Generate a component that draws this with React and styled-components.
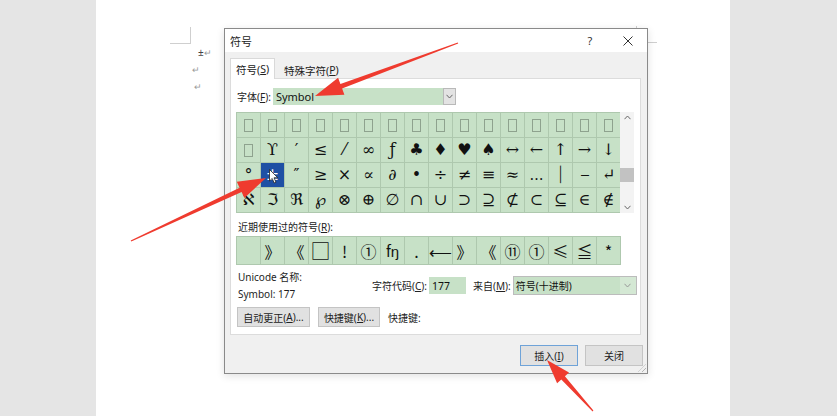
import React from 'react'
import styled, { createGlobalStyle } from 'styled-components'

const GlobalStyle = createGlobalStyle`
  html, body { margin: 0; padding: 0; }
  body {
    background: #e5e5e5;
    font-family: "Noto Sans", "Noto Sans CJK SC", sans-serif;
    font-size: 10.5px;
    color: #1e1e1e;
  }
  * { box-sizing: border-box; }
`

const Stage = styled.div`
  position: relative;
  width: 837px;
  height: 416px;
  overflow: hidden;
`

const Page = styled.div`
  position: relative;
  width: 634px;
  height: 416px;
  margin-left: 96px;
  background: #fff;
  padding: 44px 0 0 96px;
`

const CropMark = styled.div`
  position: absolute;
  left: ${(p) => p.$x}px;
  top: ${(p) => p.$y}px;
  width: 21px;
  height: 17px;
  border-color: #cfcfcf;
  border-style: solid;
  border-width: 0;
  ${(p) => (p.$side === 'left' ? 'border-right-width: 1px; border-bottom-width: 1px;' : 'border-left-width: 1px; border-bottom-width: 1px;')}
`

const DocLine = styled.div`
  height: 17px;
  line-height: 17px;
  padding-left: ${(p) => p.$indent || 0}px;
  font-family: "Noto Sans", sans-serif;
  font-size: 10px;
  color: #444;
`

const Return = styled.span`
  color: #9a9a9a;
  font-size: 9px;
`

const Dialog = styled.div`
  position: absolute;
  left: 128px;
  top: 28px;
  width: 424px;
  height: 346px;
  border: 1px solid #8a8a8a;
  background: #f0f0f0;
  display: flex;
  flex-direction: column;
  box-shadow: 0 2px 8px rgba(0, 0, 0, 0.12);
`

const TitleBar = styled.div`
  height: 23px;
  background: #fff;
  display: flex;
  align-items: center;
  padding-left: 5px;
`

const Title = styled.div`
  flex: 1;
  font-size: 11px;
  color: #222;
`

const TitleButton = styled.div`
  width: 38px;
  height: 23px;
  display: flex;
  align-items: center;
  justify-content: center;
  font-size: 11px;
  color: #333;
`

const Tabs = styled.div`
  display: flex;
  align-items: flex-end;
  height: 21px;
  margin-top: 6px;
  padding-left: 5px;
  position: relative;
  z-index: 1;
`

const Tab = styled.div`
  height: ${(p) => (p.$active ? 21 : 19)}px;
  padding: 0 ${(p) => (p.$active ? 5 : 6)}px;
  display: flex;
  align-items: center;
  background: ${(p) => (p.$active ? '#fff' : 'transparent')};
  border: 1px solid ${(p) => (p.$active ? '#d9d9d9' : 'transparent')};
  border-bottom: none;
  margin-left: ${(p) => (p.$active ? 0 : 2)}px;
  color: #222;
`

const Panel = styled.div`
  margin: -1px 6px 0 5px;
  height: 257px;
  background: #fff;
  border: 1px solid #dcdcdc;
  padding: 9px 0 0 5px;
  display: flex;
  flex-direction: column;
`

const FontRow = styled.div`
  display: flex;
  align-items: center;
  height: 17px;
  padding-left: 1px;
`

const Label = styled.span`
  color: #222;
  white-space: nowrap;
  flex-shrink: 0;
  font-size: 10px;
  min-width: ${(p) => (p.$w ? `${p.$w}px` : 'auto')};
  margin-left: ${(p) => p.$ml || 0}px;
  padding-right: ${(p) => (p.$w ? 2 : 0)}px;
`

const GreenBox = styled.div`
  width: ${(p) => p.$w}px;
  height: ${(p) => p.$h || 17}px;
  background: #c7e1c7;
  display: flex;
  align-items: center;
  padding-left: 3px;
  color: #111;
  font-size: ${(p) => p.$fs || 10.5}px;
`

const DropButton = styled.div`
  width: 13px;
  height: 17px;
  background: #e3e3e3;
  border: 1px solid #b9b9b9;
  display: flex;
  align-items: center;
  justify-content: center;
`

const GridWrap = styled.div`
  display: flex;
  margin-top: 7px;
`

const SymbolGrid = styled.div`
  display: grid;
  grid-template-columns: repeat(16, 23px);
  grid-auto-rows: ${(p) => p.$row}px;
  gap: 1px;
  padding: 1px;
  background: #aec8ae;
  width: 385px;
`

const Cell = styled.div`
  position: relative;
  background: ${(p) => (p.$selected ? '#1f50a4' : '#c7e1c7')};
  color: ${(p) => (p.$selected ? '#fff' : '#111')};
  display: flex;
  align-items: center;
  justify-content: center;
  font-family: ${(p) => (p.$cjk ? '"Noto Sans CJK SC", sans-serif' : '"DejaVu Serif", "DejaVu Sans", serif')};
  font-size: ${(p) => p.$fs || 16}px;
  line-height: 1;
`

const Missing = styled.span`
  display: inline-block;
  width: 9px;
  height: 13px;
  border: 1px solid #8ea28e;
`

const Scrollbar = styled.div`
  position: relative;
  width: 14px;
  height: 101px;
  margin-left: -1px;
  background: #f3f3f3;
  display: flex;
  flex-direction: column;
  align-items: center;
  justify-content: space-between;
  padding: 3px 0;
`

const Thumb = styled.div`
  position: absolute;
  left: 0;
  top: 56px;
  width: 14px;
  height: 14px;
  background: #c2c2c2;
`

const SectionLabel = styled.div`
  margin-top: 7px;
  height: 14px;
  line-height: 14px;
  padding-left: 2px;
  font-size: 10px;
  color: #222;
`

const RecentWrap = styled.div`
  margin-top: 2px;
`

const InfoRow = styled.div`
  display: flex;
  align-items: center;
  margin-top: 5px;
  padding-left: 2px;
  height: 31px;
`

const InfoColumn = styled.div`
  width: 134px;
  display: flex;
  flex-direction: column;
  gap: 3px;
  line-height: 14px;
  font-size: 10px;
`

const Select = styled.div`
  display: flex;
  width: 124px;
  height: 19px;
  border: 1px solid #bcbcbc;
  background: #c7e1c7;
`

const SelectText = styled.div`
  flex: 1;
  display: flex;
  align-items: center;
  padding-left: 2px;
  font-size: 10px;
  color: #111;
`

const SelectArrow = styled.div`
  width: 16px;
  display: flex;
  align-items: center;
  justify-content: center;
  background: #d4e8d4;
`

const ButtonRow = styled.div`
  display: flex;
  align-items: center;
  gap: 8px;
  margin-top: 6px;
  padding-left: 1px;
`

const Button = styled.div`
  height: ${(p) => p.$h || 20}px;
  width: ${(p) => p.$w}px;
  background: #e1e1e1;
  border: 1px solid ${(p) => (p.$primary ? '#6fa3d8' : '#c4c4c4')};
  display: flex;
  align-items: center;
  justify-content: center;
  font-size: 10px;
  color: #222;
`

const Footer = styled.div`
  flex: 1;
  display: flex;
  justify-content: flex-end;
  align-items: flex-start;
  gap: 7px;
  padding: 10px 4px 0 0;
  position: relative;
`

const Grip = styled.div`
  position: absolute;
  right: 1px;
  bottom: 1px;
  width: 8px;
  height: 8px;
  background: repeating-linear-gradient(135deg, transparent 0 2px, #b5b5b5 2px 3px);
  clip-path: polygon(100% 0, 100% 100%, 0 100%);
`

const Overlay = styled.svg`
  position: absolute;
  left: 0;
  top: 0;
  pointer-events: none;
`

const Pointer = styled.svg`
  position: absolute;
  left: 8px;
  top: 6px;
`

const Chevron = ({ up, color = '#666' }) => (
  <svg width="7" height="5" viewBox="0 0 7 5">
    <path d={up ? 'M0.5 4.2 L3.5 1 L6.5 4.2' : 'M0.5 0.8 L3.5 4 L6.5 0.8'} fill="none" stroke={color} strokeWidth="1" />
  </svg>
)

const ROWS = [
  Array(16).fill(null),
  [null, 'ϒ', '′', '≤', '⁄', '∞', 'ƒ', '♣', '♦', '♥', '♠', '↔', '←', '↑', '→', '↓'],
  ['°', '±', '″', '≥', '×', '∝', '∂', '•', '÷', '≠', '≡', '≈', '…', '⏐', '⎯', '↵'],
  ['ℵ', 'ℑ', 'ℜ', '℘', '⊗', '⊕', '∅', '∩', '∪', '⊃', '⊇', '⊄', '⊂', '⊆', '∈', '∉'],
]

const RECENT = ['', '》', '《', '□', '!', '①', 'fŋ', '.', '⟵', '》', '《', '⑪', '①', '≤', '≦', '*']

const arrow = (tx, ty, px, py, L = 24, W = 8, w = 2.4, t = 0.6) => {
  const dx = px - tx
  const dy = py - ty
  const len = Math.hypot(dx, dy)
  const ux = dx / len
  const uy = dy / len
  const nx = -uy
  const ny = ux
  const bx = px - ux * L
  const by = py - uy * L
  const pts = [
    [tx + nx * t, ty + ny * t],
    [bx + nx * w, by + ny * w],
    [bx + nx * W, by + ny * W],
    [px, py],
    [bx - nx * W, by - ny * W],
    [bx - nx * w, by - ny * w],
    [tx - nx * t, ty - ny * t],
  ]
  return pts.map((p) => p.map((v) => v.toFixed(1)).join(',')).join(' ')
}

export default function App() {
  return (
    <Stage>
      <GlobalStyle />
      <Page>
        <CropMark $side="left" $x={74} $y={27} />
        <CropMark $side="right" $x={540} $y={26} />
        <DocLine $indent={6}>
          ±<Return>↵</Return>
        </DocLine>
        <DocLine>
          <Return>↵</Return>
        </DocLine>
        <DocLine $indent={2}>
          <Return>↵</Return>
        </DocLine>

        <Dialog>
          <TitleBar>
            <Title>符号</Title>
            <TitleButton>?</TitleButton>
            <TitleButton>
              <svg width="10" height="10" viewBox="0 0 10 10">
                <path d="M0.5 0.5 L9.5 9.5 M9.5 0.5 L0.5 9.5" stroke="#333" strokeWidth="1" />
              </svg>
            </TitleButton>
          </TitleBar>

          <Tabs>
            <Tab $active>
              符号(<u>S</u>)
            </Tab>
            <Tab>
              特殊字符(<u>P</u>)
            </Tab>
          </Tabs>

          <Panel>
            <FontRow>
              <Label $w={35}>
                字体(<u>F</u>):
              </Label>
              <GreenBox $w={170} $fs={11}>Symbol</GreenBox>
              <DropButton>
                <Chevron />
              </DropButton>
            </FontRow>

            <GridWrap>
              <SymbolGrid $row={24}>
                {ROWS.map((row, r) =>
                  row.map((ch, c) => {
                    const selected = r === 2 && c === 1
                    return (
                      <Cell key={`${r}-${c}`} $selected={selected} $fs={ch === '…' ? 14 : 16}>
                        {ch === null ? <Missing /> : ch}
                        {selected && (
                          <Pointer width="10" height="15" viewBox="0 0 10 15">
                            <path d="M0.5 0.5 L0.5 12 L3.2 9.5 L5.2 14 L7 13.2 L5 8.8 L8.8 8.8 Z" fill="#fff" stroke="#222" strokeWidth="0.8" />
                          </Pointer>
                        )}
                      </Cell>
                    )
                  })
                )}
              </SymbolGrid>
              <Scrollbar>
                <Chevron up />
                <Thumb />
                <Chevron />
              </Scrollbar>
            </GridWrap>

            <SectionLabel>
              近期使用过的符号(<u>R</u>):
            </SectionLabel>
            <RecentWrap>
              <SymbolGrid $row={27}>
                {RECENT.map((ch, i) => (
                  <Cell key={i} $cjk $fs={ch === 'fŋ' ? 15 : ch === '□' ? 20 : 16}>
                    {ch}
                  </Cell>
                ))}
              </SymbolGrid>
            </RecentWrap>

            <InfoRow>
              <InfoColumn>
                <span>Unicode 名称:</span>
                <span>Symbol: 177</span>
              </InfoColumn>
              <Label $w={54}>
                字符代码(<u>C</u>):
              </Label>
              <GreenBox $w={37}>177</GreenBox>
              <Label $w={38} $ml={7}>
                来自(<u>M</u>):
              </Label>
              <Select>
                <SelectText>符号(十进制)</SelectText>
                <SelectArrow>
                  <Chevron color="#999" />
                </SelectArrow>
              </Select>
            </InfoRow>

            <ButtonRow>
              <Button $w={73}>
                自动更正(<u>A</u>)...
              </Button>
              <Button $w={62}>
                快捷键(<u>K</u>)...
              </Button>
              <Label>快捷键:</Label>
            </ButtonRow>
          </Panel>

          <Footer>
            <Button $w={58} $h={21} $primary>
              插入(<u>I</u>)
            </Button>
            <Button $w={58} $h={21}>
              关闭
            </Button>
            <Grip />
          </Footer>
        </Dialog>
      </Page>

      <Overlay width="837" height="416" viewBox="0 0 837 416">
        <polygon points={arrow(458, 43, 315, 96, 28, 9)} fill="#ef3b2f" />
        <polygon points={arrow(131, 241, 266, 178, 28, 9)} fill="#ef3b2f" />
        <polygon points={arrow(593, 411, 547, 360)} fill="#ef3b2f" />
      </Overlay>
    </Stage>
  )
}
